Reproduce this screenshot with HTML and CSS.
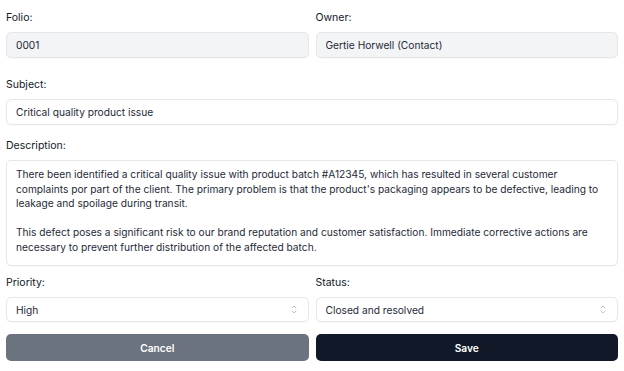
FILE: index.html
```html
<!DOCTYPE html>
<html lang="en">
<head>
    <meta charset="UTF-8" />
    <title>Edit Ticket</title>
    <link rel="stylesheet" href="styles.css">
</head>
<body>
<form class="ticket-form">
    <div class="row">
        <div class="field-group">
            <label>Folio:</label>
            <input type="text" class="readonly" value="0001" readonly>
        </div>
        <div class="field-group">
            <label>Owner:</label>
            <input type="text" class="readonly" value="Gertie Horwell (Contact)" readonly>
        </div>
    </div>

    <div class="field-group subject">
        <label>Subject:</label>
        <input type="text" value="Critical quality product issue">
    </div>

    <div class="field-group description">
        <label>Description:</label>
        <textarea rows="7" wrap="off">There been identified a critical quality issue with product batch #A12345, which has resulted in several customer
complaints por part of the client. The primary problem is that the product's packaging appears to be defective, leading to
leakage and spoilage during transit.

This defect poses a significant risk to our brand reputation and customer satisfaction. Immediate corrective actions are
necessary to prevent further distribution of the affected batch.</textarea>
    </div>

    <div class="row">
        <div class="field-group select-group">
            <label>Priority:</label>
            <div class="select-wrap">
                <select>
                    <option>High</option>
                    <option>Medium</option>
                    <option>Low</option>
                </select>
                <svg class="chevron" width="6" height="9" viewBox="0 0 6 9">
                    <path d="M1 3 L3 1 L5 3 M1 6 L3 8 L5 6" fill="none" stroke="#b4b9c1" stroke-width="0.9" stroke-linecap="round" stroke-linejoin="round"/>
                </svg>
            </div>
        </div>
        <div class="field-group select-group">
            <label>Status:</label>
            <div class="select-wrap">
                <select>
                    <option>Closed and resolved</option>
                    <option>Open</option>
                    <option>In progress</option>
                </select>
                <svg class="chevron" width="6" height="9" viewBox="0 0 6 9">
                    <path d="M1 3 L3 1 L5 3 M1 6 L3 8 L5 6" fill="none" stroke="#b4b9c1" stroke-width="0.9" stroke-linecap="round" stroke-linejoin="round"/>
                </svg>
            </div>
        </div>
    </div>

    <div class="row actions">
        <button type="button" class="btn btn-cancel">Cancel</button>
        <button type="submit" class="btn btn-save">Save</button>
    </div>
</form>
</body>
</html>
```

FILE: styles.css
```css
body {
    margin: 0;
    font-family: Inter, 'Liberation Sans', sans-serif;
    background-color: #ffffff;
    color: #111827;
}

.ticket-form {
    padding: 11px 6px 0 6px;
    display: flex;
    flex-direction: column;
}

.row {
    display: grid;
    grid-template-columns: 1fr 1fr;
    gap: 7px;
}

.field-group {
    display: flex;
    flex-direction: column;
    margin-bottom: 20px;
}

.field-group label {
    font-size: 10.5px;
    line-height: 13px;
    margin-bottom: 8px;
    color: #111827;
}

input[type="text"], select, textarea {
    font-family: inherit;
    font-size: 10.2px;
    color: #1f2937;
    border: 1px solid #e5e7eb;
    border-radius: 5px;
    background-color: #ffffff;
    box-sizing: border-box;
    box-shadow: 0 1px 1px rgba(0,0,0,0.03);
    outline: none;
    margin: 0;
}

input[type="text"] {
    height: 26px;
    padding: 0 9px;
}

input.readonly {
    background-color: #f3f4f6;
}

.subject {
    margin-bottom: 14px;
}

.description {
    margin-bottom: 10px;
}

textarea {
    height: 106px;
    padding: 6px 9px;
    line-height: 14.5px;
    resize: none;
    overflow: hidden;
    white-space: pre;
}

.select-group {
    margin-bottom: 12px;
}

.select-wrap {
    position: relative;
}

select {
    width: 100%;
    height: 25px;
    padding: 0 9px;
    appearance: none;
}

.chevron {
    position: absolute;
    right: 12px;
    top: 8px;
    pointer-events: none;
}

.btn {
    height: 27px;
    border: none;
    border-radius: 5px;
    font-family: inherit;
    font-size: 10.2px;
    font-weight: 600;
    color: #ffffff;
    cursor: pointer;
}

.btn-cancel {
    background-color: #6b7280;
}

.btn-save {
    background-color: #111827;
}
```
